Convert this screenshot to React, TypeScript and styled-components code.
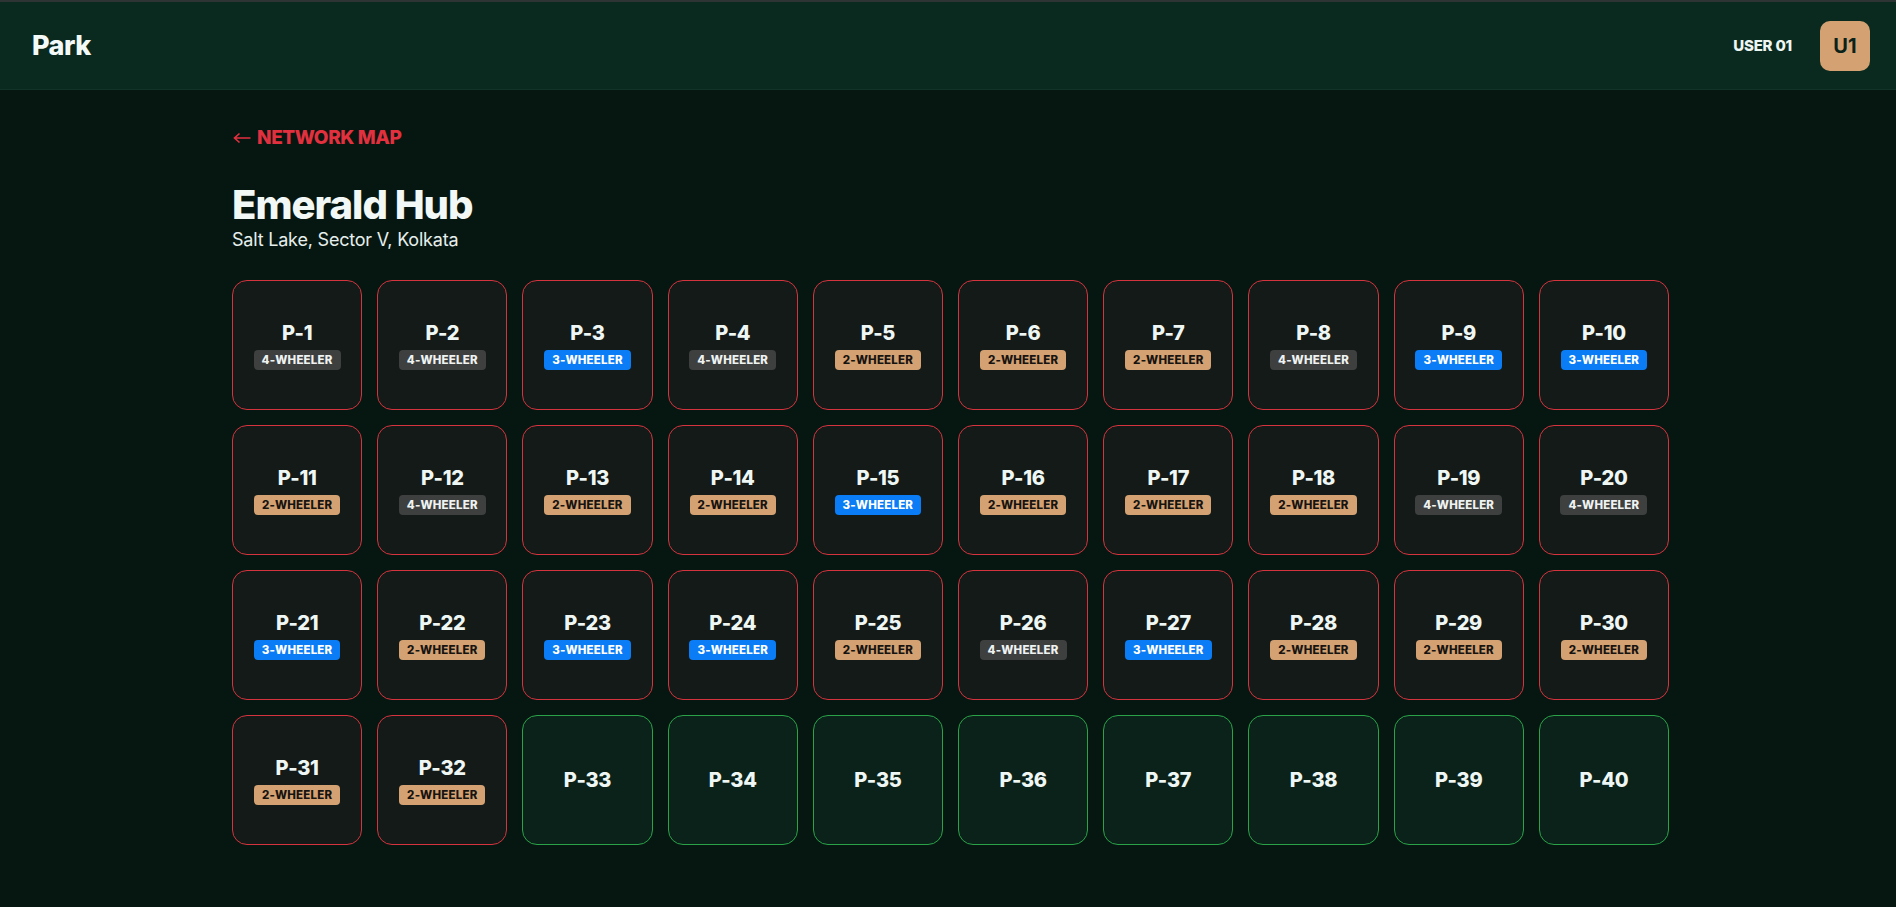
import styled, { createGlobalStyle } from "styled-components";

const GlobalStyle = createGlobalStyle`
  * {
    box-sizing: border-box;
  }
  body {
    margin: 0;
    background: #061711;
    font-family: Inter, "Noto Sans", sans-serif;
    color: #eef6f3;
  }
`;

const Page = styled.div`
  min-height: 100vh;
  background: #061711;
`;
const TopBar = styled.header`
  height: 90px;
  display: flex;
  align-items: center;
  justify-content: space-between;
  padding: 0 26px 0 32px;
  background: #0a2a20;
  border-top: 2px solid #2d3433;
  border-bottom: 1px solid #123427;
`;
const Brand = styled.div`
  font-size: 27px;
  font-weight: 800;
  letter-spacing: -0.5px;
  color: #f4faf8;
`;
const UserBox = styled.div`
  display: flex;
  align-items: center;
  gap: 28px;
`;
const UserName = styled.span`
  font-size: 15px;
  font-weight: 800;
  letter-spacing: -0.2px;
`;
const Avatar = styled.div`
  width: 50px;
  height: 50px;
  border-radius: 10px;
  background: #d4a272;
  color: #0a2219;
  display: flex;
  align-items: center;
  justify-content: center;
  font-size: 20px;
  font-weight: 700;
`;
const Main = styled.main`
  padding: 36px 227px 0 232px;
`;
const BackLink = styled.a`
  display: inline-flex;
  align-items: center;
  gap: 6px;
  color: #e3303f;
  font-size: 19px;
  font-weight: 800;
  letter-spacing: -0.4px;
  text-decoration: none;
  cursor: pointer;
  svg {
    margin-left: 1px;
  }
`;
const Title = styled.h1`
  margin: 33px 0 0;
  font-size: 40px;
  font-weight: 800;
  letter-spacing: -1px;
  line-height: 46px;
  color: #f2f8f6;
`;
const Subtitle = styled.p`
  margin: 1px 0 0;
  font-size: 18px;
  line-height: 22px;
  letter-spacing: -0.2px;
  color: #e6efec;
`;
const Grid = styled.div`
  margin-top: 29px;
  display: grid;
  grid-template-columns: repeat(10, 1fr);
  gap: 15px;
`;
const Slot = styled.div<{ $free: boolean }>`
  height: 130px;
  border-radius: 15px;
  border: 1px solid ${(p) => (p.$free ? "#2aa348" : "#d5343f")};
  background: ${(p) => (p.$free ? "#0a2219" : "#131a17")};
  display: flex;
  flex-direction: column;
  align-items: center;
  justify-content: center;
  gap: 5px;
`;
const SlotName = styled.div`
  font-size: 20px;
  font-weight: 800;
  letter-spacing: -0.3px;
  line-height: 24px;
  color: #eff7f5;
`;

const badgeColors: Record<string, { bg: string; fg: string }> = {
  "2": { bg: "#d4a272", fg: "#171310" },
  "3": { bg: "#0a7cf6", fg: "#ffffff" },
  "4": { bg: "#3e3f3f", fg: "#eef3f1" },
};

const Badge = styled.span<{ $kind: string }>`
  height: 20px;
  padding: 0 8px;
  border-radius: 4px;
  display: inline-flex;
  align-items: center;
  font-size: 11.5px;
  font-weight: 800;
  letter-spacing: 0.2px;
  background: ${(p) => badgeColors[p.$kind].bg};
  color: ${(p) => badgeColors[p.$kind].fg};
`;

// wheel type of the occupied slots, in slot order; the rest are free
const occupied = [
  "4", "4", "3", "4", "2", "2", "2", "4", "3", "3",
  "2", "4", "2", "2", "3", "2", "2", "2", "4", "4",
  "3", "2", "3", "3", "2", "4", "3", "2", "2", "2",
  "2", "2",
];

const slots = Array.from({ length: 40 }, (_, i) => ({
  id: i + 1,
  kind: occupied[i] as string | undefined,
}));

function BackArrow() {
  return (
    <svg width="18" height="12" viewBox="0 0 18 12" fill="none">
      <path d="M17.5 6H1.5M6.5 1.5L1.5 6L6.5 10.5" stroke="currentColor" strokeWidth="1.6" />
    </svg>
  );
}

function App() {
  return (
    <Page>
      <GlobalStyle />
      <TopBar>
        <Brand>Park</Brand>
        <UserBox>
          <UserName>USER 01</UserName>
          <Avatar>U1</Avatar>
        </UserBox>
      </TopBar>
      <Main>
        <BackLink>
          <BackArrow />
          NETWORK MAP
        </BackLink>
        <Title>Emerald Hub</Title>
        <Subtitle>Salt Lake, Sector V, Kolkata</Subtitle>
        <Grid>
          {slots.map((slot) => (
            <Slot key={slot.id} $free={!slot.kind}>
              <SlotName>P-{slot.id}</SlotName>
              {slot.kind && <Badge $kind={slot.kind}>{slot.kind}-WHEELER</Badge>}
            </Slot>
          ))}
        </Grid>
      </Main>
    </Page>
  );
}

export default App;
